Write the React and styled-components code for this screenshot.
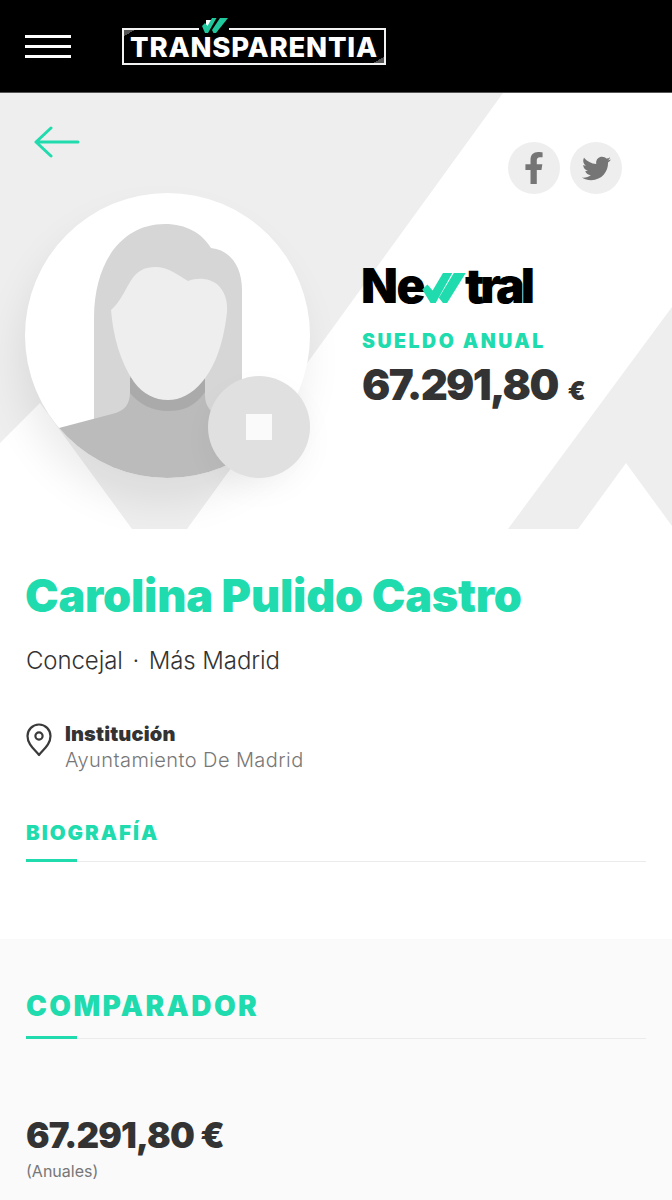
import React from 'react';
import styled, { createGlobalStyle } from 'styled-components';
import { FaFacebookF, FaTwitter } from 'react-icons/fa';

const GREEN = '#20dbad';
const INK = '#333';

const GlobalStyle = createGlobalStyle`
  html, body {
    margin: 0;
    height: 1200px;
    overflow: hidden;
    background: #fff;
    font-family: Inter, "Liberation Sans", sans-serif;
    color: ${INK};
  }
  * { box-sizing: border-box; }
`;

const Header = styled.header`
  height: 93px;
  background: #000;
  border-bottom: 1px solid #555;
  display: flex;
  align-items: center;
  padding-left: 25px;
  gap: 51px;
`;

const Burger = styled.div`
  width: 46px;
  display: flex;
  flex-direction: column;
  gap: 7px;
  span {
    height: 3px;
    background: #fff;
  }
`;

const Logo = styled.div`
  position: relative;
  width: 264px;
  height: 37px;
  margin-top: 1px;
  border: 2px solid #f2f2f2;
  display: flex;
  align-items: center;
  justify-content: center;
  color: #fff;
  font-weight: 800;
  font-size: 27.5px;
  letter-spacing: 0.8px;
  white-space: nowrap;
  &::before,
  &::after {
    content: '';
    position: absolute;
    width: 11px;
    height: 6px;
  }
  &::before {
    left: 0;
    top: 0;
    background: linear-gradient(to bottom right, #555 50%, transparent 50%);
  }
  &::after {
    right: 0;
    bottom: 0;
    background: linear-gradient(to top left, #555 50%, transparent 50%);
  }
`;

const LogoChecks = styled.svg`
  position: absolute;
  left: 75px;
  top: -12px;
  width: 30px;
  height: 16px;
`;

const Hero = styled.section`
  position: relative;
  height: 436px;
  padding: 0 26px 0 25px;
  overflow: hidden;
`;

const HeroShapes = styled.svg`
  position: absolute;
  left: 0;
  top: 0;
  width: 672px;
  height: 436px;
`;

const HeroTop = styled.div`
  position: relative;
  height: 100px;
  display: flex;
  justify-content: space-between;
  align-items: flex-start;
  padding: 33px 24px 0 9px;
`;

const Social = styled.div`
  display: flex;
  gap: 10px;
  margin-top: 16px;
`;

const SocialButton = styled.a`
  width: 52px;
  height: 52px;
  border-radius: 50%;
  background: #eee;
  color: #757575;
  display: flex;
  align-items: center;
  justify-content: center;
  font-size: ${({ $size }) => $size}px;
`;

const HeroBody = styled.div`
  position: relative;
  display: flex;
  gap: 52px;
`;

const Portrait = styled.div`
  position: relative;
  width: 285px;
  height: 285px;
  border-radius: 50%;
  background: #fff;
  box-shadow: -6px 24px 40px rgba(0, 0, 0, 0.08);
`;

const PortraitArt = styled.svg`
  display: block;
  width: 285px;
  height: 285px;
`;

const StopButton = styled.div`
  position: absolute;
  right: 0;
  bottom: 0;
  width: 102px;
  height: 102px;
  border-radius: 50%;
  background: #e0e0e0;
  box-shadow: 0 12px 30px rgba(0, 0, 0, 0.04);
  display: flex;
  align-items: center;
  justify-content: center;
  &::after {
    content: '';
    width: 26px;
    height: 26px;
    background: #fafafa;
  }
`;

const Salary = styled.div`
  padding-top: 68px;
`;

const Newtral = styled.div`
  display: flex;
  align-items: center;
  height: 48px;
  margin-left: -1px;
  color: #000;
  font-weight: 900;
  font-size: 48px;
  letter-spacing: -3.9px;
  svg {
    width: 44px;
    height: 30px;
    margin: 5px -1px 0 -2px;
  }
`;

const NewtralStart = styled.span`
  letter-spacing: -1.5px;
`;

const SalaryLabel = styled.div`
  margin-top: 20px;
  color: ${GREEN};
  font-weight: 900;
  font-size: 19.5px;
  letter-spacing: 2.5px;
  line-height: 24px;
`;

const SalaryValue = styled.div`
  margin-top: 7px;
  font-weight: 900;
  font-size: 42px;
  line-height: 50px;
  letter-spacing: -1.7px;
  white-space: nowrap;
  small {
    margin-left: 10px;
    font-size: 26px;
    letter-spacing: 0;
  }
`;

const Profile = styled.section`
  height: 410px;
  padding: 40px 26px 0;
`;

const Name = styled.h1`
  margin: 0 0 0 -1px;
  color: ${GREEN};
  font-weight: 900;
  font-size: 45px;
  line-height: 54px;
  letter-spacing: -0.2px;
  white-space: nowrap;
`;

const Role = styled.p`
  margin: 22px 0 0;
  font-size: 24px;
  line-height: 32px;
  font-weight: 350;
  letter-spacing: -0.1px;
`;

const RoleDot = styled.span`
  margin: 0 3px;
`;

const Place = styled.div`
  margin-top: 44px;
  display: flex;
  gap: 13px;
`;

const PlaceIcon = styled.svg`
  width: 26px;
  height: 34px;
  margin-top: 2px;
  flex: none;
`;

const PlaceTitle = styled.div`
  font-weight: 900;
  font-size: 20px;
  line-height: 26px;
  letter-spacing: 0.15px;
`;

const PlaceValue = styled.div`
  font-size: 20px;
  font-weight: 350;
  line-height: 26px;
  letter-spacing: 0.42px;
  color: #777;
`;

const SectionTitle = styled.h2`
  position: relative;
  margin: 0;
  color: ${GREEN};
  font-weight: 900;
  font-size: ${({ $size }) => $size}px;
  letter-spacing: ${({ $spacing }) => $spacing}px;
  line-height: 28px;
  height: ${({ $height }) => $height}px;
  border-bottom: 1px solid #ebebeb;
  &::after {
    content: '';
    position: absolute;
    left: 0;
    bottom: -1px;
    width: 51px;
    height: 3px;
    background: ${GREEN};
  }
`;

const BioTitle = styled(SectionTitle)`
  margin-top: 46px;
`;

const Comparator = styled.section`
  height: 261px;
  background: #fafafa;
  padding: 53px 26px 0;
`;

const Amount = styled.div`
  margin-top: 74px;
  font-weight: 900;
  font-size: 35px;
  line-height: 44px;
  letter-spacing: -0.85px;
`;

const AmountNote = styled.div`
  margin-top: 2px;
  font-size: 16px;
  line-height: 24px;
  color: #777;
`;

const App = () => (
  <>
    <GlobalStyle />
    <Header>
      <Burger>
        <span />
        <span />
        <span />
      </Burger>
      <Logo>
        TRANSPARENTIA
        <LogoChecks viewBox="-3 0 30 16">
          <rect x="-3" y="9" width="30" height="3" fill="#000" />
          <rect x="4" y="2" width="5" height="8" fill="#fff" />
          <path fill="#20c99d" d="M0 8 L3 5 L5.5 8 L10 0 H14.5 L6 15 H3 Z" />
          <path fill="#20c99d" d="M10 12 L18 0 H26 L14 15 H11.5 Z" />
        </LogoChecks>
      </Logo>
    </Header>

    <Hero>
      <HeroShapes viewBox="0 93 672 436" fill="#eee">
        <polygon points="0,93 503,93 187,529 132,529 40,403 0,443" />
        <polygon points="672,307 508,529 578,529 626,463 672,526" />
      </HeroShapes>
      <HeroTop>
        <svg width="46" height="32" viewBox="0 0 46 32" fill="none" stroke={GREEN} strokeWidth="3" strokeLinecap="round" strokeLinejoin="round">
          <path d="M44 16 H2 M17 2 L2 16 L17 30" />
        </svg>
        <Social>
          <SocialButton $size={32}><FaFacebookF /></SocialButton>
          <SocialButton $size={29}><FaTwitter /></SocialButton>
        </Social>
      </HeroTop>
      <HeroBody>
        <Portrait>
          <PortraitArt viewBox="25 193 285 285">
            <defs>
              <clipPath id="portrait-clip">
                <circle cx="167.5" cy="335.5" r="142.5" />
              </clipPath>
            </defs>
            <g clipPath="url(#portrait-clip)">
              <path fill="#d6d6d6" d="M94 440 V318 C94 262 122 224 165 224 C186 224 202 233 211 248 C230 250 242 266 242 290 V420 H200 V440 Z" />
              <path fill="#bbb" d="M40 433 L112 414 C125 411 130 404 130 392 V372 H205 V396 C205 406 212 414 222 420 L300 490 H40 Z" />
              <path fill="#aaa" d="M130 378 H205 V392 C195 407 182 411 168 411 C152 411 139 404 130 393 Z" />
              <path fill="#eee" d="M111 310 C120 302 124 292 130 282 C137 270 146 267 155 267 C168 267 178 275 188 281 C198 277 210 278 218 285 C224 291 228 300 227 312 C224 340 216 366 202 382 C192 394 180 400 168 400 C155 400 143 394 134 382 C120 362 113 335 111 310 Z" />
            </g>
          </PortraitArt>
          <StopButton />
        </Portrait>
        <Salary>
          <Newtral>
            <NewtralStart>Ne</NewtralStart>
            <svg viewBox="0 0 42 29" fill={GREEN}>
              <path d="M0 16 L5 11 L10 17 L20 0 H29 L13 29 H8 Z" />
              <path d="M16 24 L30.5 0 H42 L24 29 H20 Z" />
            </svg>
            tral
          </Newtral>
          <SalaryLabel>SUELDO ANUAL</SalaryLabel>
          <SalaryValue>67.291,80<small>€</small></SalaryValue>
        </Salary>
      </HeroBody>
    </Hero>

    <Profile>
      <Name>Carolina Pulido Castro</Name>
      <Role>Concejal <RoleDot>·</RoleDot> Más Madrid</Role>
      <Place>
        <PlaceIcon viewBox="0 0 26 34" fill="none" stroke="#3a3a3a" strokeWidth="2.2">
          <path d="M13 32 C8 26 1.5 21 1.5 13 A11.5 11.5 0 0 1 24.5 13 C24.5 21 18 26 13 32 Z" strokeLinejoin="round" />
          <circle cx="13" cy="13" r="3.6" />
        </PlaceIcon>
        <div>
          <PlaceTitle>Institución</PlaceTitle>
          <PlaceValue>Ayuntamiento De Madrid</PlaceValue>
        </div>
      </Place>
      <BioTitle $size={20.5} $spacing={2} $height={43}>BIOGRAFÍA</BioTitle>
    </Profile>

    <Comparator>
      <SectionTitle $size={28} $spacing={2.4} $height={47}>COMPARADOR</SectionTitle>
      <Amount>67.291,80 €</Amount>
      <AmountNote>(Anuales)</AmountNote>
    </Comparator>
  </>
);

export default App;
